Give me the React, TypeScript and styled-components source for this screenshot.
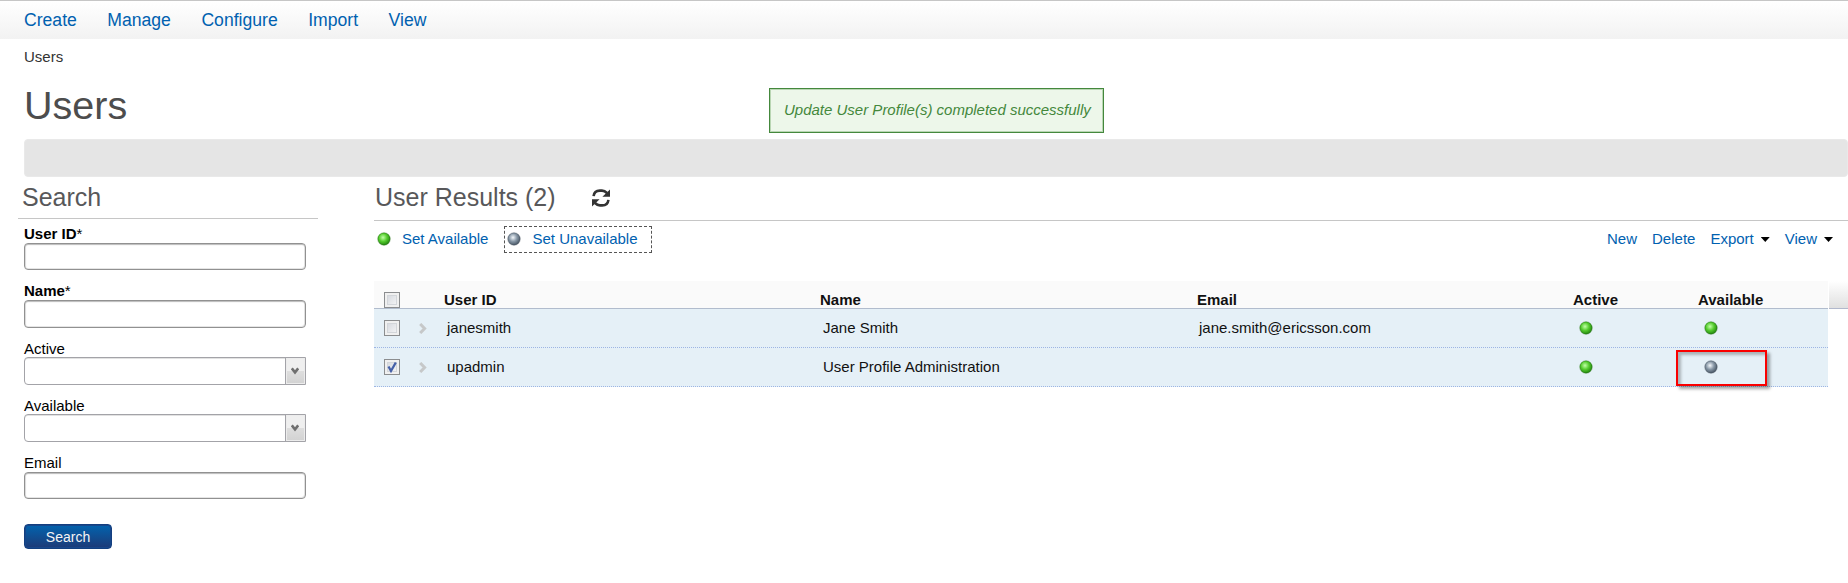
import React from "react";
import styled, { createGlobalStyle } from "styled-components";

const Global = createGlobalStyle`
  * { box-sizing: border-box; }
  body { margin: 0; background: #fff; color: #111; font: 15px/18px "Liberation Sans", Arial, sans-serif; overflow: hidden; }
`;

const Page = styled.div`
  width: 1848px;
  height: 583px;
  overflow: hidden;
`;

const MenuBar = styled.nav`
  display: flex;
  gap: 30.5px;
  height: 39px;
  padding: 9px 0 0 24px;
  border-top: 1px solid #c6c6c6;
  background: linear-gradient(#fff, #f2f2f2);
  font-size: 17.6px;
  line-height: 21px;
`;

const Link = styled.a`
  color: #0061b0;
  white-space: nowrap;
`;

const Breadcrumb = styled.div`
  height: 36px;
  padding: 9px 0 0 24px;
  color: #333;
`;

const TitleRow = styled.header`
  display: flex;
  align-items: flex-start;
  height: 64px;
  padding-left: 24px;
`;

const Title = styled.h1`
  width: 745px;
  margin: 7px 0 0;
  font-size: 39.5px;
  line-height: 46px;
  font-weight: 400;
  color: #4d4d4d;
`;

const Notice = styled.div`
  width: 335px;
  height: 45px;
  margin-top: 13px;
  padding: 12px 0 0 14px;
  border: 1px solid #44883c;
  box-shadow: inset 0 0 0 1px #b9d6b3;
  background: #edf7ea;
  color: #44883c;
  font-style: italic;
  white-space: nowrap;
`;

const ActionBar = styled.div`
  height: 38px;
  margin-left: 24px;
  border: 1px solid #e9e9e9;
  border-radius: 4px;
  background: #e5e5e5;
`;

const Content = styled.div`
  display: flex;
`;

const Sidebar = styled.aside`
  width: 300px;
  margin: 0 56px 0 18px;
`;

const SectionTitle = styled.h2<{ $height: number; $inset: number }>`
  display: flex;
  align-items: flex-start;
  gap: 36px;
  height: ${(p) => p.$height}px;
  margin: 0;
  padding: 5px 0 0 ${(p) => p.$inset}px;
  border-bottom: 1px solid #c6c6c6;
  color: #58585a;
  font-size: 25px;
  font-weight: 400;
  line-height: 30px;
`;

const RefreshButton = styled.span`
  display: flex;
  align-items: center;
  height: 32px;
`;

const Form = styled.form`
  display: flex;
  flex-direction: column;
  padding: 5px 0 0 6px;
`;

const Field = styled.label`
  display: block;
  height: 57px;
  color: #000;
`;

const Caption = styled.span<{ $required?: boolean }>`
  display: block;
  height: 19px;
  line-height: ${(p) => (p.$required ? 19 : 21)}px;
  font-weight: ${(p) => (p.$required ? 700 : 400)};
`;

const Asterisk = styled.span`
  font-weight: 400;
`;

const TextBox = styled.input<{ $height: number; $offset: number }>`
  display: block;
  width: 282px;
  height: ${(p) => p.$height}px;
  margin-top: ${(p) => p.$offset}px;
  border: 1px solid #919191;
  border-radius: 4px;
  outline: none;
  box-shadow: inset 0 1px 1px #bbb, inset 1px 0 1px #ddd, inset -1px -1px 0 #e6e6e6;
  background: #fff;
`;

const ComboBox = styled.span`
  display: flex;
  justify-content: flex-end;
  width: 282px;
  height: 28px;
  border: 1px solid #a3a3a8;
  border-radius: 4px 0 0 4px;
  box-shadow: inset 0 1px 0 #e2e2e2;
`;

const ComboArrow = styled.span`
  display: flex;
  align-items: center;
  justify-content: center;
  width: 20px;
  padding-right: 1px;
  border-left: 1px solid #a3a3a8;
  background: linear-gradient(#efefef 0 50%, #dedede 50%, #d2d2d2);
  box-shadow: inset 0 0 0 1px #ececec;
`;

const SearchButton = styled.button`
  width: 88px;
  height: 25px;
  margin-top: 15px;
  padding: 1px 0 0;
  border: 1px solid #143f7f;
  border-radius: 4px;
  background: linear-gradient(#0263ae, #1d3a77);
  box-shadow: inset 0 0 0 1px #17478b;
  color: #f4f4f4;
  font: 14px/20px "Liberation Sans", Arial, sans-serif;
`;

const Results = styled.main`
  flex: 1;
`;

const Toolbar = styled.div`
  display: flex;
  justify-content: space-between;
  height: 60px;
  padding: 5px 15px 0 0;
`;

const ToolGroup = styled.div<{ $gap: number }>`
  display: flex;
  gap: ${(p) => p.$gap}px;
`;

const Tool = styled.span<{ $focused?: boolean }>`
  display: flex;
  align-items: center;
  gap: 11px;
  height: 27px;
  padding: 0 ${(p) => (p.$focused ? 13 : 14)}px 1px 2px;
  border: 1px dashed ${(p) => (p.$focused ? "#555" : "transparent")};
`;

const MenuLink = styled.span`
  display: flex;
  align-items: center;
  gap: 7px;
  height: 26px;
`;

const Caret = styled.i`
  width: 9px;
  height: 5px;
  margin-top: 1px;
  background: #000;
  clip-path: polygon(0 0, 100% 0, 50% 100%);
`;

const TableArea = styled.div`
  display: flex;
`;

const Table = styled.div`
  width: 1454px;
`;

const columns = "35px 35px 376px 376px 376px 125px 131px";

const HeaderRow = styled.div`
  display: grid;
  grid-template-columns: ${columns};
  height: 28px;
  padding-top: 10px;
  border-bottom: 1px solid #b1bccd;
  background: #fafafa;
  font-weight: 700;
  line-height: 18px;
  white-space: nowrap;
`;

const Row = styled.div`
  display: grid;
  grid-template-columns: ${columns};
  height: 39px;
  border-bottom: 1px dotted #9db5e4;
  background: #e5f0f7;
`;

const Cell = styled.div<{ $inset?: number }>`
  position: relative;
  display: flex;
  align-items: center;
  padding-left: ${(p) => p.$inset ?? 3}px;
`;

const HeaderEnd = styled.div`
  flex: 1;
  height: 28px;
  margin-left: 1px;
  border-bottom: 1px solid #b1b8cc;
  background: linear-gradient(#fff, #e0e0e0);
`;

const CheckBox = styled.span`
  display: flex;
  width: 16px;
  height: 16px;
  border: 1px solid #8b8d8f;
  box-shadow: inset 0 0 0 2px #f0f0f0, inset 0 0 0 3px #d3d6da;
  background: linear-gradient(135deg, #cfd3da, #fafafa);
`;

const Highlight = styled.span`
  position: absolute;
  left: -21px;
  top: 2px;
  width: 91px;
  height: 36px;
  border: 2px solid #fa0000;
  box-shadow: 3px 3px 3px rgba(0, 0, 0, 0.35), inset 3px 3px 3px rgba(0, 0, 0, 0.26);
`;

function Orb({ on }: { on: boolean }) {
  const id = on ? "orb-on" : "orb-off";
  const [light, mid, dark, rim] = on
    ? ["#c2ffa8", "#55cc2e", "#23850f", "#236c16"]
    : ["#f4f8fc", "#8797a6", "#475563", "#48535e"];
  return (
    <svg width="14" height="14" viewBox="0 0 14 14">
      <defs>
        <radialGradient id={id} cx="42%" cy="38%" r="62%">
          <stop offset="0" stopColor={light} />
          <stop offset="0.52" stopColor={mid} />
          <stop offset="1" stopColor={dark} />
        </radialGradient>
      </defs>
      <circle cx="7" cy="7" r="6.2" fill={`url(#${id})`} stroke={rim} strokeOpacity="0.6" strokeWidth="0.8" />
    </svg>
  );
}

function Check({ on }: { on?: boolean }) {
  return (
    <CheckBox>
      {on && (
        <svg width="14" height="14" viewBox="0 0 14 14">
          <path d="M3.5 6.5L6 11L10.8 2.5" fill="none" stroke="#4560a8" strokeWidth="2.3" />
        </svg>
      )}
    </CheckBox>
  );
}

function RefreshIcon() {
  return (
    <svg width="18" height="18" viewBox="0 0 18 18">
      <g fill="none" stroke="#333" strokeWidth="2.6">
        <path d="M1.6 7.2C2 3.4 4 1.6 7.8 1.6H10C12 1.6 13.4 2.4 15 4" />
        <path d="M16.4 10.8C16 14.6 14 16.4 10.2 16.4H8C6 16.4 4.6 15.6 3 14" />
      </g>
      <path d="M18 .6V7.8H10.4ZM0 17.4V10.2H7.6Z" fill="#333" />
    </svg>
  );
}

function Expander() {
  return (
    <svg width="8" height="11" viewBox="0 0 8 11">
      <path d="M1.2 1L5.6 5.5L1.2 10" fill="none" stroke="#c6c8c9" strokeWidth="3" />
    </svg>
  );
}

function Combo() {
  return (
    <ComboBox>
      <ComboArrow>
        <svg width="8" height="8" viewBox="0 0 8 8">
          <path d="M.8 1.4L4 5.4L7.2 1.4" fill="none" stroke="#6f6f6f" strokeWidth="2.6" />
        </svg>
      </ComboArrow>
    </ComboBox>
  );
}

const fields = [
  { label: "User ID", required: true, height: 27 },
  { label: "Name", required: true },
  { label: "Active", combo: true },
  { label: "Available", combo: true },
  { label: "Email", height: 27, offset: 1 },
];

const users = [
  { id: "janesmith", name: "Jane Smith", email: "jane.smith@ericsson.com", available: true, selected: false },
  { id: "upadmin", name: "User Profile Administration", email: "", available: false, selected: true },
];

export default function App() {
  return (
    <Page>
      <Global />
      <MenuBar>
        {["Create", "Manage", "Configure", "Import", "View"].map((m) => (
          <Link key={m}>{m}</Link>
        ))}
      </MenuBar>
      <Breadcrumb>Users</Breadcrumb>
      <TitleRow>
        <Title>Users</Title>
        <Notice>Update User Profile(s) completed successfully</Notice>
      </TitleRow>
      <ActionBar />
      <Content>
        <Sidebar>
          <SectionTitle $height={42} $inset={4}>Search</SectionTitle>
          <Form>
            {fields.map((f) => (
              <Field key={f.label}>
                <Caption $required={f.required}>
                  {f.label}
                  {f.required && <Asterisk>*</Asterisk>}
                </Caption>
                {f.combo ? <Combo /> : <TextBox $height={f.height ?? 28} $offset={f.offset ?? 0} />}
              </Field>
            ))}
            <SearchButton type="button">Search</SearchButton>
          </Form>
        </Sidebar>
        <Results>
          <SectionTitle $height={44} $inset={1}>
            User Results (2)
            <RefreshButton><RefreshIcon /></RefreshButton>
          </SectionTitle>
          <Toolbar>
            <ToolGroup $gap={1}>
              <Tool><Orb on /><Link>Set Available</Link></Tool>
              <Tool $focused><Orb on={false} /><Link>Set Unavailable</Link></Tool>
            </ToolGroup>
            <ToolGroup $gap={15}>
              <MenuLink><Link>New</Link></MenuLink>
              <MenuLink><Link>Delete</Link></MenuLink>
              <MenuLink><Link>Export</Link><Caret /></MenuLink>
              <MenuLink><Link>View</Link><Caret /></MenuLink>
            </ToolGroup>
          </Toolbar>
          <TableArea>
            <Table>
              <HeaderRow>
                <Cell $inset={10}><Check /></Cell>
                <Cell />
                <Cell $inset={0}>User ID</Cell>
                <Cell $inset={0}>Name</Cell>
                <Cell $inset={1}>Email</Cell>
                <Cell $inset={1}>Active</Cell>
                <Cell $inset={1}>Available</Cell>
              </HeaderRow>
              {users.map((u) => (
                <Row key={u.id}>
                  <Cell $inset={10}><Check on={u.selected} /></Cell>
                  <Cell $inset={10}><Expander /></Cell>
                  <Cell>{u.id}</Cell>
                  <Cell>{u.name}</Cell>
                  <Cell>{u.email}</Cell>
                  <Cell $inset={7}><Orb on /></Cell>
                  <Cell $inset={7}><Orb on={u.available} />{!u.available && <Highlight />}</Cell>
                </Row>
              ))}
            </Table>
            <HeaderEnd />
          </TableArea>
        </Results>
      </Content>
    </Page>
  );
}
